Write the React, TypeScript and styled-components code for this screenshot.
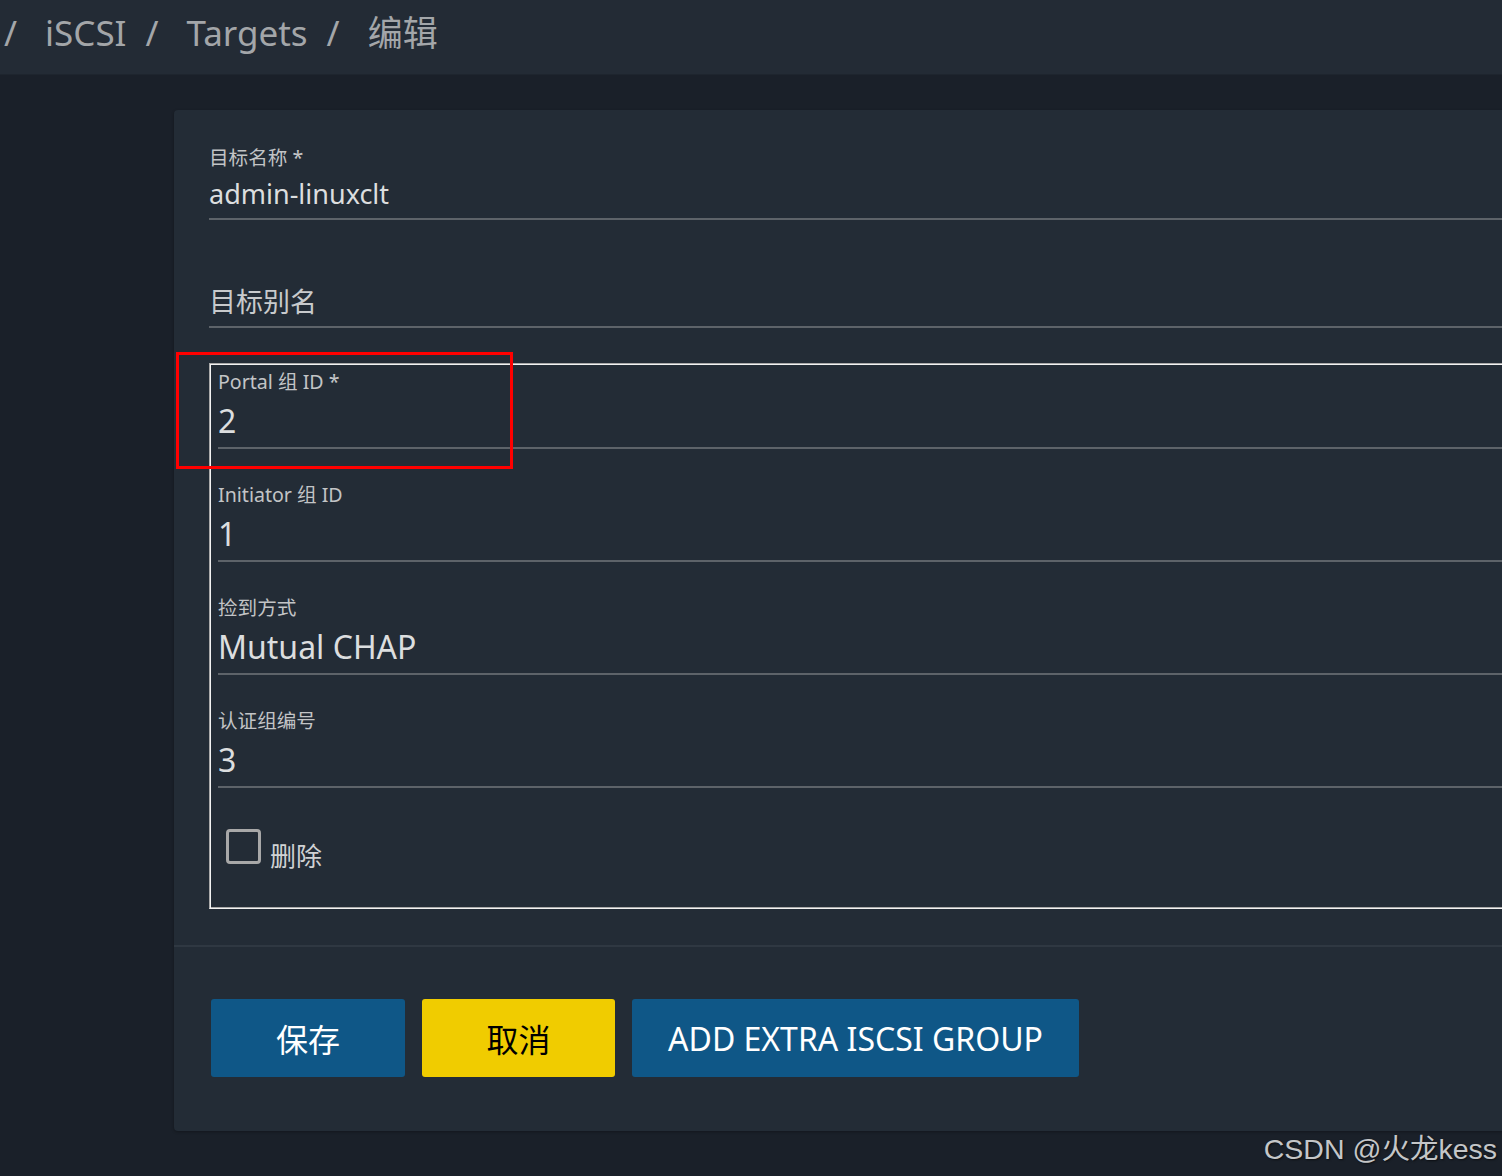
import React from "react";
import styled, { createGlobalStyle } from "styled-components";

const GlobalStyle = createGlobalStyle`
  html, body {
    margin: 0;
    padding: 0;
    background: #1a2029;
  }
  body {
    font-family: "Noto Sans", "Noto Sans CJK SC", sans-serif;
  }
`;

const Page = styled.div`
  position: relative;
  width: 1502px;
  height: 1176px;
  overflow: hidden;
  background: #1a2029;
`;

const Header = styled.header`
  height: 75px;
  display: flex;
  align-items: center;
  padding: 0 0 10px 4px;
  background: #232b35;
  border-bottom: 1px solid #1e252e;
  color: #a3a6a9;
  font-size: 35px;
  box-sizing: border-box;
`;

const Crumb = styled.span`
  line-height: 1;
`;

const Sep = styled.span<{ $lead?: boolean }>`
  line-height: 1;
  margin: ${(p) => (p.$lead ? "0 0 0 28px" : "0 28px 0 19px")};
`;

const Main = styled.main`
  padding: 35px 0 0 174px;
`;

const Card = styled.section`
  position: relative;
  width: 1400px;
  background: #232c36;
  border-radius: 4px;
  box-shadow: 0 1px 3px rgba(0, 0, 0, 0.3);
`;

const FormArea = styled.div`
  padding: 35px 0 36px 35px;
`;

const Field = styled.div<{ $gap?: number }>`
  margin-bottom: ${(p) => p.$gap ?? 33}px;
  border-bottom: 2px solid #5d6369;
`;

const Label = styled.div`
  font-size: 19.6px;
  line-height: 26px;
  height: 26px;
  color: #c2c4c6;
  margin-bottom: 4px;
`;

const Value = styled.div<{ $big?: boolean; $placeholder?: boolean }>`
  font-size: ${(p) => (p.$big ? 32 : 27)}px;
  line-height: ${(p) => (p.$big ? 44 : 38)}px;
  padding-bottom: ${(p) => (p.$big ? 4 : 5)}px;
  color: ${(p) => (p.$placeholder ? "#c8cacc" : "#dcdedf")};
`;

/* groove-like double line: grey outside / white inside on top-left, reversed at the bottom */
const GroupSet = styled.fieldset`
  margin: 0;
  padding: 5px 0 44px 8px;
  border: 1px solid #a9a9a9;
  border-bottom-color: #f2f2f2;
  border-right: none;
  box-shadow: inset 1px 1px 0 #f2f2f2, inset 0 -1px 0 #a9a9a9;
  min-width: 0;
`;

const CheckRow = styled.label`
  display: flex;
  align-items: flex-end;
  gap: 9px;
  margin: 41px 0 0 8px;
  color: #d0d2d4;
  font-size: 26px;
  line-height: 16px;
`;

const CheckBox = styled.span`
  width: 35px;
  height: 35px;
  box-sizing: border-box;
  border: 3px solid #a8a8a8;
  border-radius: 4px;
`;

const Actions = styled.div`
  display: flex;
  gap: 17px;
  padding: 52px 0 54px 37px;
  border-top: 2px solid #2f3842;
`;

const Button = styled.button<{ $w: number; $tone: "primary" | "warn" }>`
  width: ${(p) => p.$w}px;
  height: 78px;
  border: none;
  border-radius: 3px;
  font-family: "Noto Sans", "Noto Sans CJK SC", sans-serif;
  font-size: 32px;
  background: ${(p) => (p.$tone === "warn" ? "#f0cc00" : "#0f5787")};
  color: ${(p) => (p.$tone === "warn" ? "#000" : "#fff")};
  padding: 0;
  cursor: pointer;
  white-space: nowrap;
`;

const Highlight = styled.div`
  position: absolute;
  left: 2px;
  top: 242px;
  width: 337px;
  height: 117px;
  box-sizing: border-box;
  border: 3px solid #ff0000;
  pointer-events: none;
`;

const Watermark = styled.div`
  position: absolute;
  right: 5px;
  bottom: 9px;
  font-family: "Liberation Sans", "Noto Sans CJK SC", sans-serif;
  font-size: 28.5px;
  color: #c4c6c8;
  text-shadow: 1px 1px 2px rgba(0, 0, 0, 0.6);
`;

const groupFields = [
  { label: "Portal 组 ID *", value: "2" },
  { label: "Initiator 组 ID", value: "1" },
  { label: "捡到方式", value: "Mutual CHAP" },
  { label: "认证组编号", value: "3" },
];

const crumbs = ["iSCSI", "Targets", "编辑"];

export default function App() {
  return (
    <Page>
      <GlobalStyle />
      <Header>
        <Crumb>/</Crumb>
        {crumbs.map((c, i) => (
          <React.Fragment key={c}>
            {i === 0 ? <Sep $lead /> : <Sep>/</Sep>}
            <Crumb>{c}</Crumb>
          </React.Fragment>
        ))}
      </Header>
      <Main>
        <Card>
          <FormArea>
            <Field>
              <Label>目标名称 *</Label>
              <Value>admin-linuxclt</Value>
            </Field>
            <Field $gap={35}>
              <Label />
              <Value $placeholder>目标别名</Value>
            </Field>
            <GroupSet>
              {groupFields.map((f, i) => (
                <Field key={f.label} $gap={i === groupFields.length - 1 ? 0 : 33}>
                  <Label>{f.label}</Label>
                  <Value $big>{f.value}</Value>
                </Field>
              ))}
              <CheckRow>
                <CheckBox />
                删除
              </CheckRow>
            </GroupSet>
          </FormArea>
          <Actions>
            <Button $w={194} $tone="primary">保存</Button>
            <Button $w={193} $tone="warn">取消</Button>
            <Button $w={447} $tone="primary">ADD EXTRA ISCSI GROUP</Button>
          </Actions>
          <Highlight />
        </Card>
      </Main>
      <Watermark>CSDN @火龙kess</Watermark>
    </Page>
  );
}
